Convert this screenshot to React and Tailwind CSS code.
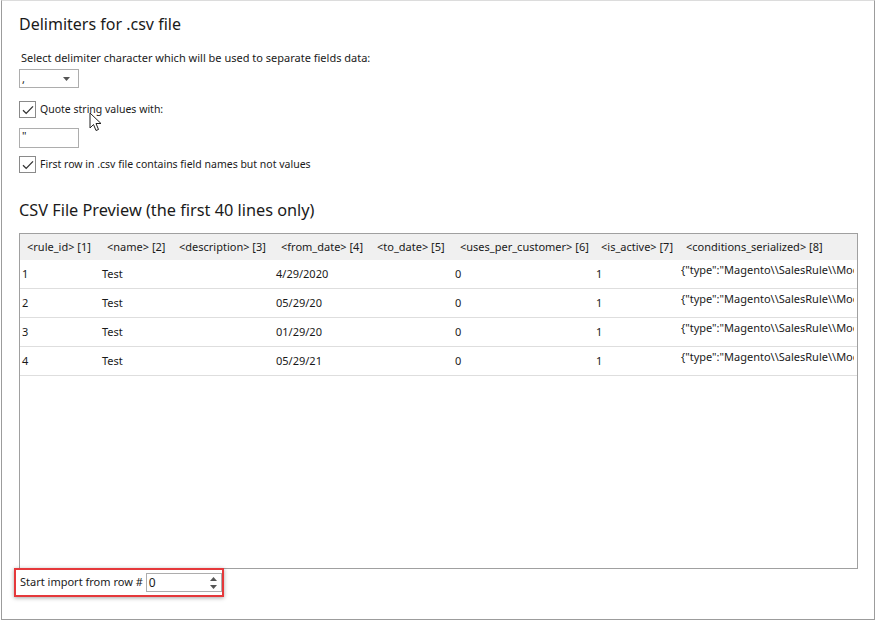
import React from 'react'

const cols = [
  { w: 'w-[80px]', head: '<rule_id> [1]' },
  { w: 'w-[72px]', head: '<name> [2]' },
  { w: 'w-[102px]', head: '<description> [3]' },
  { w: 'w-[96px]', head: '<from_date> [4]' },
  { w: 'w-[83px]', head: '<to_date> [5]' },
  { w: 'w-[141px]', head: '<uses_per_customer> [6]' },
  { w: 'w-[85px]', head: '<is_active> [7]' },
  { w: 'w-[220px]', head: '<conditions_serialized> [8]' },
]

const rows = [
  ['1', 'Test', '', '4/29/2020', '', '0', '1'],
  ['2', 'Test', '', '05/29/20', '', '0', '1'],
  ['3', 'Test', '', '01/29/20', '', '0', '1'],
  ['4', 'Test', '', '05/29/21', '', '0', '1'],
]

const serialized = '{"type":"Magento\\\\SalesRule\\\\Mod'

function Check({ label }) {
  return (
    <div className="flex items-center gap-[4px]">
      <div className="w-[17px] h-[17px] border border-[#8a8a8a] bg-white flex items-center justify-center">
        <svg width="12" height="10" viewBox="0 0 12 10">
          <path d="M1 5.2 L4.2 8.4 L11 1.4" fill="none" stroke="#333" strokeWidth="1.3" />
        </svg>
      </div>
      <span className="text-[10.5px] text-[#1a1a1a]">{label}</span>
    </div>
  )
}

export default function App() {
  return (
    <div className="w-[876px] h-[622px] bg-white pl-px font-['Segoe_UI','Noto_Sans',sans-serif] text-[#1a1a1a]">
      <div className="relative w-[874px] h-[620px] border border-[#9c9c9c] border-t-[#dcdcdc] pl-[17px] pt-[11px]">
        <h1 className="text-[16px] leading-[24px] text-[#1a1a1a]">Delimiters for .csv file</h1>

        <p className="mt-[14px] ml-[2px] text-[11px] leading-[16px]">
          Select delimiter character which will be used to separate fields data:
        </p>

        <div className="mt-[3px] w-[60px] h-[19px] border border-[#adadad] relative">
          <span className="absolute left-[2px] top-[1px] text-[11px]">,</span>
          <svg className="absolute right-[8px] top-[7px]" width="7" height="4" viewBox="0 0 7 4">
            <path d="M0 0 L7 0 L3.5 4 Z" fill="#555" />
          </svg>
        </div>

        <div className="mt-[13px]">
          <Check label="Quote string values with:" />
        </div>

        <div className="mt-[10px] w-[60px] h-[20px] border border-[#adadad] relative">
          <span className="absolute left-[2px] top-[-1px] text-[11px]">"</span>
        </div>

        <div className="mt-[8px]">
          <Check label="First row in .csv file contains field names but not values" />
        </div>

        <h2 className="mt-[25px] text-[16.3px] leading-[24px]">CSV File Preview (the first 40 lines only)</h2>

        <div className="mt-[11px] w-[839px] h-[336px] border border-[#a0a0a0] overflow-hidden">
          <div className="flex h-[26px] bg-[#f0f0f0] items-center">
            {cols.map((c, i) => (
              <div key={i} className={`${c.w} shrink-0 pl-[7px] text-[11px] whitespace-nowrap text-[#1a1a1a]`}>
                {c.head}
              </div>
            ))}
          </div>
          {rows.map((r, ri) => (
            <div key={ri} className="flex h-[29px] border-b border-[#dedede]">
              {r.map((v, ci) => (
                <div key={ci} className={`${cols[ci].w} shrink-0 pl-[2px] text-[11px] flex items-center`}>
                  {v}
                </div>
              ))}
              <div className="w-[175px] shrink-0 pl-[2px] pt-[2px] text-[11px] whitespace-nowrap overflow-hidden">
                {serialized}
              </div>
            </div>
          ))}
        </div>

        <div className="mt-[-1px] ml-[-5px] w-[210px] h-[29px] border-2 border-[#e5383b] shadow-[0_1px_4px_rgba(0,0,0,0.35)] flex items-center pl-[4px] gap-[3px]">
          <span className="text-[11px] whitespace-nowrap">Start import from row #</span>
          <div className="w-[76px] h-[19px] border border-[#adadad] relative flex items-center pl-[2px] text-[12px]">
            0
            <svg className="absolute right-[4px] top-[3px]" width="7" height="12" viewBox="0 0 7 12">
              <path d="M0 4 L7 4 L3.5 0 Z" fill="#555" />
              <path d="M0 8 L7 8 L3.5 12 Z" fill="#555" />
            </svg>
          </div>
        </div>

        <svg className="absolute left-[87px] top-[111px]" width="14" height="21" viewBox="0 0 14 21">
          <path d="M1 1 L1 16 L4.5 12.5 L7 18.5 L9.5 17.5 L7 11.5 L12 11.5 Z" fill="#fff" stroke="#222" strokeWidth="1" strokeLinejoin="round" />
        </svg>
      </div>
    </div>
  )
}
